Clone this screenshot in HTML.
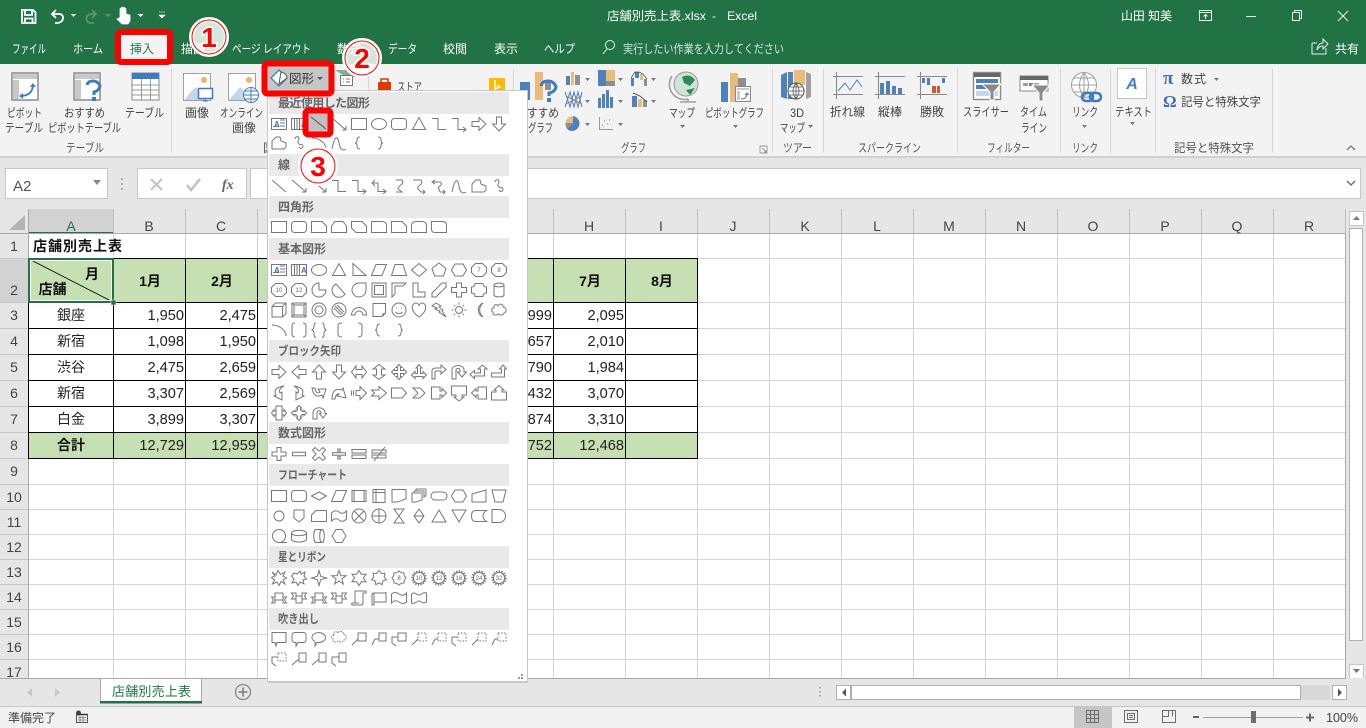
<!DOCTYPE html>
<html lang="ja"><head><meta charset="utf-8"><title>店舗別売上表.xlsx - Excel</title>
<style>
html,body{margin:0;padding:0;background:#e6e6e6;overflow:hidden}
svg{display:block;position:absolute;left:0;top:0}
text{font-family:"Liberation Sans","Noto Sans CJK JP",sans-serif;font-size:12px;fill:#444}
.w text{fill:#fff}
.rb text{fill:#444;font-size:12px}
.gl text{fill:#555;font-size:12px}
.n text{font-size:14.6px;fill:#222;text-anchor:end}
.c text{font-size:14px;fill:#222;text-anchor:middle}
.b text{font-size:14px;font-weight:700;fill:#111;text-anchor:middle}
.h text{font-size:14px;fill:#444;text-anchor:middle}
.hd text{font-size:12px;font-weight:700;fill:#666}
.ic{fill:none;stroke:#777;stroke-width:1}
.sm{font-size:6px;fill:#666;text-anchor:middle;stroke:none}
.blueA{font-size:8px;font-weight:700;fill:#3b78c2;stroke:none}
.num{font-size:28px;font-weight:700;fill:#f00;stroke:#fff;stroke-width:3px;paint-order:stroke;text-anchor:middle;font-family:"Liberation Sans",sans-serif}
</style></head><body>
<svg width="1366" height="728" viewBox="0 0 1366 728" xmlns="http://www.w3.org/2000/svg">
<defs>
<path id="tbx" d="M-7.500-5.500h15v11h-15z"/>
<path id="line" d="M-7-6L7 6"/>
<path id="arr" d="M-7-6L7 6M7 6V2M7 6H3"/>
<path id="darr" d="M-7-6L7 6M7 6V2M7 6H3M-7-6V-2M-7-6H-3"/>
<path id="rect" d="M-7.500-5.500h15v11h-15z"/>
<ellipse id="ell" cx="0" cy="0" rx="7.500" ry="5.500"/>
<rect id="rr" x="-7.500" y="-5.500" width="15" height="11" rx="3"/>
<path id="tri" d="M0-6.500L6.500 5.500H-6.500Z"/>
<path id="elb" d="M-7-5.500H-1V5.500H7"/>
<path id="elba" d="M-7-5.500H-1V5.500H7M4 3l3 2.500-3 2.500"/>
<path id="elbd" d="M-7-3H-1V5.500H7M4 3l3 2.500-3 2.500M-4-6l-3 3 3 3"/>
<path id="ra" d="M-7-2.500H0V-6.500L7 0 0 6.500V2.500H-7Z"/>
<path id="la" d="M7-2.500H0V-6.500L-7 0 0 6.500V2.500H7Z"/>
<path id="ua" d="M-2.500 7V0H-6.500L0-7 6.500 0H2.500V7Z"/>
<path id="da" d="M-2.500-7V0H-6.500L0 7 6.500 0H2.500V-7Z"/>
<path id="free" d="M-7 6V-2L-3-6H1L2-2 7 0V4L5 6Z"/>
<path id="scr" d="M-4-4c0-3 5-3 4 0-1 3-2 3 0 5s3-1 4 2c0 3-3 3-4 1"/>
<path id="arc" d="M-7-5C0-5 7 0 7 6"/>
<path id="crv" d="M-7 6C-4-9-1-7 0 0S4 8 7 6"/>
<path id="lb" d="M2-6Q-1-6-1-3T-3 0Q-1 0-1 3T2 6"/>
<path id="rb" d="M-2-6Q1-6 1-3T3 0Q1 0 1 3T-2 6"/>
<path id="cur" d="M-3-6H3Q5-3 2-1T-1 3L3 6H-3"/>
<path id="cura" d="M-6-6H2Q4-3 1-1T-1 3L2 6H6M4 4l2 2-2 2"/>
<path id="curd" d="M-7-4H1Q4-2 1 0T0 3L1 6H6M4 4l2 2-2 2M-4-6l-3 2 3 2"/>
<path id="sn1" d="M-7.500-5.500H3L7.500-1V5.500H-7.500Z"/>
<path id="sn2" d="M-4-5.500H4L7.500-1V5.500H-7.500V-1Z"/>
<path id="sn3" d="M-7.500-5.500H3L7.500-1V5.500H-3L-7.500 1Z"/>
<path id="sn4" d="M-7.500-5.500H3Q7.500-5.500 7.500-1V5.500H-7.500Z"/>
<path id="sn5" d="M-3-5.500H3Q7.500-5.500 7.500-1V5.500H-7.500V-1Q-7.500-5.500-3-5.500Z"/>
<path id="sn6" d="M-7.500-5.500H4Q7.500-5.500 7.500-2V5.500H-4Q-7.500 5.500-7.500 2Z"/>
<path id="rtri" d="M-6-6.500L7 5.500H-6Z"/>
<path id="para" d="M-3-5.500H7.500L3 5.500H-7.500Z"/>
<path id="trap" d="M-4-5.500H4L7.500 5.500H-7.500Z"/>
<path id="diam" d="M0-6.500L7.500 0 0 6.500-7.500 0Z"/>
<path id="fdia" d="M0-4L7.500 0 0 4-7.500 0Z"/>
<path id="pent" d="M0-7L7-1.500 4.500 6H-4.500L-7-1.500Z"/>
<path id="hex" d="M-4-6H4L7.500 0 4 6H-4L-7.500 0Z"/>
<path id="oct" d="M-3.500-6.500H3.500L7.500-2.500V2.500L3.500 6.500H-3.500L-7.500 2.500V-2.500Z"/>
<path id="pie" d="M0-7A7 7 0 1 0 7 0H0Z"/>
<path id="chord" d="M-3-6A7 7 0 1 0 6 4Z"/>
<path id="tear" d="M7-7V0A7 7 0 1 1 0-7Z"/>
<path id="frame" d="M-7-7H7V7H-7ZM-4.500-4.500H4.500V4.500H-4.500Z"/>
<path id="hfr" d="M-7-7H7L4-4H-4V4L-7 7Z"/>
<path id="lsh" d="M-6-7H-1V2H6V7H-6Z"/>
<path id="diag" d="M-7 3L3-7H7V-3L-3 7H-7Z"/>
<path id="plus" d="M-2.500-7H2.500V-2.500H7.500V2.500H2.500V7H-2.500V2.500H-7.500V-2.500H-2.500Z"/>
<path id="plq" d="M-4-6.500H4Q4-3 7.500-3V3Q4 3 4 6.500H-4Q-4 3-7.500 3V-3Q-4-3-4-6.500Z"/>
<path id="can" d="M-5-5V5C-5 7.500 5 7.500 5 5V-5C5-7.500-5-7.500-5-5C-5-2.500 5-2.500 5-5"/>
<path id="cube" d="M-7-3.500H3.500V7H-7ZM-7-3.500L-3.500-7H7V3.500L3.500 7M3.500-3.500L7-7"/>
<path id="bev" d="M-7-7H7V7H-7ZM-5-5H5V5H-5ZM-7-7L-5-5M7-7L5-5M-7 7L-5 5M7 7L5 5"/>
<path id="don" d="M0-7A7 7 0 1 0 0 7A7 7 0 1 0 0-7M0-4A4 4 0 1 0 0 4A4 4 0 1 0 0-4"/>
<path id="nos" d="M0-7A7 7 0 1 0 0 7A7 7 0 1 0 0-7M-4-4L4 4M-2-5L5 2M-5-2L2 5"/>
<path id="barc" d="M-7.500 5A7.500 7.500 0 0 1 7.500 5H4A4 4 0 0 0-4 5Z"/>
<path id="fold" d="M-6-6.500H6.500V3L3 6.500H-6ZM3 6.500L4 4 6.500 3"/>
<path id="smi" d="M0-7A7 7 0 1 0 0 7A7 7 0 1 0 0-7M-3-2h.8M2.200-2H3M-3.500 2Q0 5.500 3.500 2"/>
<path id="hrt" d="M0 7C-10 0-7-7-3-7-1-7 0-5 0-4 0-5 1-7 3-7 7-7 10 0 0 7Z"/>
<path id="bolt" d="M-3-7L2-4 0-3 4 0 3 1 7 7 0 2 1 1-4-1-2-2-7-4Z"/>
<path id="sun" d="M0-3.500A3.500 3.500 0 1 0 0 3.500A3.500 3.500 0 1 0 0-3.500M0-7.500V-5.500M0 5.500V7.500M-7.500 0H-5.500M5.500 0H7.500M-5-5L-4-4M5 5L4 4M-5 5L-4 4M5-5L4-4"/>
<path id="moon" d="M4-7A7.500 7.500 0 0 0 4 7A9 9 0 0 1 4-7Z"/>
<path id="cld" d="M-5-2C-6-6-2-6-1-4 0-7 5-6 4-3 8-3 8 3 5 3 4 6 0 5-1 4-3 6-7 5-6 2-8 2-8-2-5-2Z"/>
<path id="bp" d="M-4-7Q-7-7-7-4V4Q-7 7-4 7M4-7Q7-7 7-4V4Q7 7 4 7"/>
<path id="bcp" d="M-3-7Q-5-7-5-4T-7.500 0Q-5 0-5 4T-3 7M3-7Q5-7 5-4T7.500 0Q5 0 5 4T3 7"/>
<path id="lbk" d="M2-7Q-2-7-2-4V4Q-2 7 2 7"/>
<path id="rbk" d="M-2-7Q2-7 2-4V4Q2 7-2 7"/>
<path id="lra" d="M-7.500 0L-3-6V-2.500H3V-6L7.500 0 3 6V2.500H-3V6Z"/>
<path id="uda" d="M0-7.500L6-3H2.500V3H6L0 7.500-6 3H-2.500V-3H-6Z"/>
<path id="qua" d="M0-7.500L3-4.500H1.500V-1.500H4.500V-3L7.500 0 4.500 3V1.500H1.500V4.500H3L0 7.500-3 4.500H-1.500V1.500H-4.500V3L-7.500 0-4.500-3V-1.500H-1.500V-4.500H-3Z"/>
<path id="lru" d="M0-7.500L3-4H1.500V1.500H4V-.5L7.500 3 4 6.500V4.500H-4V6.500L-7.500 3-4-.5V1.500H-1.500V-4H-3Z"/>
<path id="bent" d="M-7 7V-1Q-7-4-3-4H2V-7L7-2.500 2 2V-1H-3Q-4-1-4 0V7Z"/>
<path id="utn" d="M-7 7V-2C-7-8 5-8 5-2V0H7.500L3 5-1.500 0H1V-2C1-4-3-4-3-2V7Z"/>
<path id="lup" d="M7 -3V4H-3V6.500L-7.500 2.500-3-1.500V1H3V-3H.5L5-7 9.500-3Z" transform="translate(-1.500 0)"/>
<path id="bup" d="M-7.500 1H2.500V-3H.5L4-7 7.500-3H5.500V5H-7.500Z"/>
<path id="cvr" d="M5-7Q-7-5-3 2L-5 3 3 7 3-1 1 0Q-1-4 5-7Z"/>
<path id="cvl" d="M-5-7Q7-5 3 2L5 3-3 7-3-1-1 0Q1-4-5-7Z"/>
<path id="cvu" d="M-7-5Q-5 6 3 2L4 5 7-4-1-4 1-1Q-3 2-4-5Z"/>
<path id="cvd" d="M-7 6Q-7-6 3-3L4-5 7 5-2 3 0 1Q-3 0-4 6Z"/>
<path id="stra" d="M-7.500-2.500V2.500M-5.500-2.500V2.500M-3-2.500H1V-6.500L7.500 0 1 6.500V2.500H-3Z"/>
<path id="ntch" d="M-7.500-3H0V-6.500L7.500 0 0 6.500V3H-7.500L-4.500 0Z"/>
<path id="home" d="M-7.500-5H3L7.500 0 3 5H-7.500Z"/>
<path id="chev" d="M-6-5H1L6 0 1 5H-6L-1 0Z"/>
<path id="clr" d="M-7.500-6H1V-2H3V-4.500L7.500 0 3 4.500V2H1V6H-7.500Z"/>
<path id="cld2" d="M-7.500-7H7.500V2H3V4H5L0 8-5 4H-3V2H-7.500Z"/>
<path id="cll" d="M7.500-6H-1V-2H-3V-4.500L-7.500 0-3 4.500V2H-1V6H7.500Z"/>
<path id="clu" d="M-7.500 7V-1H-3V-3H-5L0-7.500 5-3H3V-1H7.500V7Z"/>
<path id="cllr" d="M-3-7H3V7H-3ZM-3-2H-5V-3.500L-7.500 0-5 3.500V2H-3M3-2H5V-3.500L7.500 0 5 3.500V2H3"/>
<path id="clq" d="M0-7.500L2.500-5H1.500V-3H3V-1.500H5V-2.500L7.500 0 5 2.500V1.500H3V3H1.500V5H2.500L0 7.500-2.500 5H-1.500V3H-3V1.500H-5V2.500L-7.500 0-5-2.500V-1.500H-3V-3H-1.500V-5H-2.500Z"/>
<path id="cira" d="M-6 6V0C-6-7 6-7 6 0V.5H7.500L4 5 .5.5H2V0C2-3-2-3-2 0V6Z"/>
<path id="mth+" d="M-2-6.500H2V-2H7V2H2V6.500H-2V2H-7V-2H-2Z"/>
<path id="mth-" d="M-6.500-1.800H6.500V1.800H-6.500Z"/>
<path id="mthx" d="M-4-6.500L0-3 4-6.500 6.500-4 3 0 6.500 4 4 6.500 0 3-4 6.500-6.500 4-3 0-6.500-4Z"/>
<path id="mthd" d="M-6.500-1.200H6.500V1.200H-6.500ZM-1.200-5h2.400v2.400h-2.400ZM-1.200 2.600h2.400v2.400h-2.400Z"/>
<path id="mthe" d="M-7-4.500H7V-1H-7ZM-7 1H7V4.500H-7Z"/>
<path id="mthn" d="M-7-4H7V-1H-7ZM-7 1H7V4H-7ZM-5 7L6-7"/>
<path id="pfl" d="M-7-5.500H7V5.500H-7ZM-5-5.500V5.500M5-5.500V5.500"/>
<path id="int" d="M-6-6.500H6V6.500H-6ZM-6-3.500H6M-3-6.500V6.500"/>
<path id="doc" d="M-7-6.500H7V3C4 3 1 7-7 6Z"/>
<path id="mdoc" d="M-7-3H3V4C1 4-2 7-7 6ZM-5-3V-5H5V2M-3-5V-7H7V0H5"/>
<path id="term" d="M-4-4H4A4 4 0 0 1 4 4H-4A4 4 0 0 1-4-4Z"/>
<path id="manu" d="M-7-2L7-6V6H-7Z"/>
<path id="mano" d="M-7-6H7L4 6H-4Z"/>
<circle id="sc" cx="0" cy="0" r="5"/>
<path id="offp" d="M-5-6H5V2L0 6-5 2Z"/>
<path id="card" d="M-3-5.500H7.500V5.500H-7.500V-1Z"/>
<path id="tape" d="M-7.500-3Q-3.500-7 0-4T7.500-5V3Q3.500 7 0 4T-7.500 5Z"/>
<path id="sumj" d="M0-7A7 7 0 1 0 0 7A7 7 0 1 0 0-7M-5-5L5 5M5-5L-5 5"/>
<path id="orf" d="M0-7A7 7 0 1 0 0 7A7 7 0 1 0 0-7M0-7V7M-7 0H7"/>
<path id="coll" d="M-5-7H5L-5 7H5Z"/>
<path id="sort" d="M0-7L5 0 0 7-5 0ZM-5 0H5"/>
<path id="ext" d="M0-6L7 6H-7Z"/>
<path id="merg" d="M-7-6H7L0 6Z"/>
<path id="stor" d="M-4-5.500H7.500Q4-3 4 0T7.500 5.500H-4Q-7.500 5-7.500 0T-4-5.500Z"/>
<path id="dly" d="M-7-6.500H0A6.500 6.500 0 0 1 0 6.500H-7Z"/>
<path id="seq" d="M0-6.500A6.500 6.500 0 1 0 0 6.500H8M0 6.500A6.500 6.500 0 0 0 0-6.500"/>
<path id="mag" d="M-7.500-3V3C-7.500 7 7.500 7 7.500 3V-3C7.500-6.500-7.500-6.500-7.500-3C-7.500 .5 7.500 .5 7.500-3"/>
<path id="dir" d="M-3-6.500H3C6-6.500 6 6.500 3 6.500H-3C-6 6.500-6-6.500-3-6.500ZM3-6.500C0-6.500 0 6.500 3 6.500"/>
<path id="dsp" d="M-3-6.500H3L7 0 3 6.500H-3L-7 0Z"/>
<path id="exp1" d="M-7-6L-3-3-1-7.500 1.500-3.500 6-6 4-2 7.500 0 4 2 6 6 2 3.500 0 7.500-2 4-6.500 6-4.500 2-7.500-.5-4-2Z"/>
<path id="exp2" d="M-5-5L-2-4 1-7 2-4 6-6 5-2 7.500 1 4 2 5 6 1 4-1 7.500-3 4-7 5-5 1-7.500-2Z"/>
<path id="st4" d="M0-7.500L1.700-1.700 7.500 0 1.700 1.700 0 7.500-1.700 1.700-7.500 0-1.700-1.700Z"/>
<path id="st5" d="M0-7.500L1.800-2.400 7.100-2.300 2.900.9 4.400 6 0 3-4.400 6-2.900.9-7.100-2.300-1.800-2.400Z"/>
<path id="st6" d="M0-7.500L2.300-3.700H7L4.400 0 7 3.700H2.300L0 7.500-2.300 3.700H-7L-4.400 0-7-3.700H-2.300Z"/>
<path id="st7" d="M0-7.500L2.400-4.500 6-4.700 5.200-1 7.300 1.700 3.900 2.900 3.200 6.700 0 4.800-3.200 6.700-3.900 2.900-7.300 1.700-5.200-1-6-4.700-2.400-4.500Z"/>
<path id="st8" d="M0-7L2.200-5.300 5-5 5.300-2.200 7 0 5.300 2.200 5 5 2.200 5.300 0 7-2.200 5.300-5 5-5.300 2.200-7 0-5.300-2.200-5-5-2.200-5.300Z"/>
<g id="st16"><circle cx="0" cy="0" r="6.700" stroke-width="2" stroke-dasharray="1.300 1.300"/><circle cx="0" cy="0" r="5.600"/></g>
<path id="rbu" d="M-7.500-1L-4-1V-5H4V-1H7.500L5.500 2 7.500 5H4V2H-4V5H-7.500L-5.500 2ZM-4-1V2M4-1V2"/>
<path id="rbd" d="M-7.500-5H-3V-2H3V-5H7.500L5.500-2 7.500 1H3V5H-3V1H-7.500L-5.500-2ZM-3-2V1M3-2V1"/>
<path id="vsc" d="M-4-7H6Q8-7 7-5H4V5Q4 7 2 7H-6Q-8 7-7 5H-4ZM-4 5H0"/>
<path id="hsc" d="M-7-3Q-7-5-5-5H7V4H-5V7H-7ZM-5-5V4M7-5V-6"/>
<path id="wav" d="M-7.500-4Q-4-7 0-4T7.500-5V4Q4 7 0 4T-7.500 5Z"/>
<path id="dwav" d="M-7.500-4Q-5-6-2.500-4T2.500-4 7.500-5V4Q5 6 2.500 4T-2.500 4-7.500 5Z"/>
<path id="wr" d="M-7-6.500H7V3.500H-2L-3 7-4 3.500H-7Z"/>
<path id="wrr" d="M-4-6.500H4Q7-6.500 7-3.500V.5Q7 3.500 4 3.500H-1L-3 7-3 3.500H-4Q-7 3.500-7 .5V-3.500Q-7-6.500-4-6.500Z"/>
<path id="wel" d="M0-6.500A7.500 5 0 1 1 -2 3.500L-4 7V2.500A7.500 5 0 0 1 0-6.500Z"/>
<path id="cl1" d="M-1-6H7V2H-1ZM-1 0L-7 6"/>
<path id="cl2" d="M0-6H7V2H0ZM0 0H-4L-7 6"/>
<path id="cl3" d="M-1-6H7V2H-1ZM-1-2H-7V4L-3 7"/>
<path id="cl1d" d="M-1-6H7V2H-1Z" stroke-dasharray="1.500 1.500"/>
<path id="ac1" d="M0-6H7V3H0ZM0-6V3M0 0L-7 6"/>
<path id="ac3" d="M0-6H7V3H0ZM0-6V3M0-2H-7V4L-3 7"/>
</defs>

<!-- title bar -->
<rect width="1366" height="64" fill="#217346"/>
<g fill="none" stroke="#fff" stroke-width="1.800">
<path d="M22 10H33L35.500 12.500V23H22Z"/>
<path d="M25 10.500V15H32V10.500M25 23V18.500H32.500V23"/>
<path d="M56 10L52 14 56 18M52.500 14H60Q63.500 15 63 18.500T58 23H55"/>
<path d="M92 10L96 14 92 18M95.500 14H93Q86.500 14 86.500 18.500T91 23H94" stroke="#5a9476"/>
</g>
<path d="M70.500 14h6l-3 3z" fill="#cfe0d6"/><path d="M105 14h6l-3 3z" fill="#5a9476"/>
<path d="M120 9a3.500 3.500 0 0 1 6 0v5l4 1v6l-2 3h-6l-5-5 2-1 1 1zM123 9v3" fill="#fff" stroke="#fff" stroke-width=".8"/>
<path d="M137.500 14h6l-3 3z" fill="#fff"/>
<path d="M159 12h6M159 15h6l-3 3z" fill="#fff" stroke="#fff" stroke-width=".6"/>
<g class="w">
<text x="607" y="20" textLength="99" lengthAdjust="spacingAndGlyphs">店舗別売上表.xlsx</text>
<text x="712" y="20">-</text>
<text x="727" y="20" textLength="30" lengthAdjust="spacingAndGlyphs">Excel</text>
<text x="1121" y="20" textLength="51" lengthAdjust="spacingAndGlyphs">山田 知美</text>
<text x="12" y="53" textLength="34" lengthAdjust="spacingAndGlyphs">ファイル</text>
<text x="73" y="53" textLength="30" lengthAdjust="spacingAndGlyphs">ホーム</text>
<text x="181" y="53" textLength="24" lengthAdjust="spacingAndGlyphs">描画</text>
<text x="232" y="53" textLength="79" lengthAdjust="spacingAndGlyphs">ページ レイアウト</text>
<text x="337" y="53" textLength="24" lengthAdjust="spacingAndGlyphs">数式</text>
<text x="388" y="53" textLength="29" lengthAdjust="spacingAndGlyphs">データ</text>
<text x="443" y="53" textLength="24" lengthAdjust="spacingAndGlyphs">校閲</text>
<text x="494" y="53" textLength="24" lengthAdjust="spacingAndGlyphs">表示</text>
<text x="544" y="53" textLength="31" lengthAdjust="spacingAndGlyphs">ヘルプ</text>
<text x="623" y="53" textLength="161" lengthAdjust="spacingAndGlyphs" style="fill:#d4e5db">実行したい作業を入力してください</text>
<text x="1335" y="53" textLength="24" lengthAdjust="spacingAndGlyphs">共有</text>
</g>
<g fill="none" stroke="#e8f0ec" stroke-width="1">
<circle cx="610" cy="45" r="4.500"/><path d="M607 49L603 54"/>
<path d="M1312 43H1317M1312 43V54H1326V48M1317 50Q1318 43 1323 43V39L1328 44 1323 49V46Q1319 46 1317 50Z"/>
<path d="M1199.500 10.500H1211.500V20.500H1199.500ZM1199.500 12.500H1211.500M1205.500 19V14.500M1203.500 16.500L1205.500 14.500 1207.500 16.500"/>
<path d="M1246 16.500H1256"/>
<path d="M1292.500 12.500H1299.500V20.500H1292.500ZM1294.500 12.500V10.500H1301.500V18.500H1299.500"/>
<path d="M1338 11L1348 21M1348 11L1338 21" stroke-width="1.100"/>
</g>

<!-- ribbon -->
<rect y="64" width="1366" height="93" fill="#f3f3f3"/>
<rect y="157" width="1366" height="52" fill="#e6e6e6"/>
<rect y="156" width="1366" height="2" fill="#d0d0d0"/>
<path d="M171.500 69V153M513.500 69V153M772.500 69V153M823.500 69V153M957.500 69V153M1060.500 69V153M1110.500 69V153M1155.500 69V153M1272.500 69V153M368.500 69V90" stroke="#d6d6d6"/>

<!-- pivot table -->
<path d="M12 73H38V100H12Z" fill="#fff" stroke="#8a8a8a" stroke-width="1.500"/>
<path d="M13 74H37V79H13ZM13 80H19V99H13Z" fill="#c9c9c9"/>
<path d="M20 96Q33 96 33 84" fill="none" stroke="#3d7cc1" stroke-width="1.800"/>
<path d="M30 87l3-4 3 4zM23 93l-4 3 4 3z" fill="#3d7cc1"/>
<!-- recommended pivot -->
<path d="M74 73H100V100H74Z" fill="#fff" stroke="#8a8a8a" stroke-width="1.500"/>
<path d="M75 74H99V79H75ZM75 80H81V99H75Z" fill="#c9c9c9"/>
<path d="M87 85Q88 81 93 81T100 86Q99 91 94 92V95" fill="none" stroke="#3d7cc1" stroke-width="3"/>
<rect x="92" y="97" width="4" height="4" fill="#3d7cc1"/>
<!-- table -->
<rect x="132" y="73" width="27" height="27" fill="#fff" stroke="#8a8a8a"/>
<rect x="132" y="73" width="27" height="6" fill="#3d7cc1"/>
<path d="M132.500 85H159M132.500 90H159M132.500 95H159M141.500 79V100M150.500 79V100" stroke="#9a9a9a"/>
<!-- image -->
<g id="i1"><path d="M183.500 73.500H210.500V100.500H183.500Z" fill="#fff" stroke="#a0a0a0"/>
<path d="M184 100L195 87 203 94 206 100Z" fill="#c4d6ea"/><circle cx="204" cy="80" r="3" fill="#edb55f"/></g>
<rect x="198.500" y="88.500" width="14" height="10" fill="#fff" stroke="#3d7cc1" stroke-width="1.500"/><path d="M203 101H208M205.500 99V101" stroke="#3d7cc1"/>
<path d="M228.500 73.500H255.500V100.500H228.500Z" fill="#fff" stroke="#a0a0a0"/>
<path d="M229 100L240 87 248 94 251 100Z" fill="#c4d6ea"/><circle cx="249" cy="80" r="3" fill="#edb55f"/>
<circle cx="251" cy="95" r="7.500" fill="#fff" stroke="#3d7cc1"/><path d="M243.500 95H258.500M251 87.500V102.500M245 91H257M245 99H257" stroke="#3d7cc1" fill="none"/>
<g class="rb">
<text x="7" y="117" textLength="35" lengthAdjust="spacingAndGlyphs">ピボット</text>
<text x="5" y="132" textLength="38" lengthAdjust="spacingAndGlyphs">テーブル</text>
<text x="64" y="117" textLength="41" lengthAdjust="spacingAndGlyphs">おすすめ</text>
<text x="48" y="132" textLength="73" lengthAdjust="spacingAndGlyphs">ピボットテーブル</text>
<text x="125" y="117" textLength="39" lengthAdjust="spacingAndGlyphs">テーブル</text>
<text x="185" y="117" textLength="24">画像</text>
<text x="220" y="117" textLength="43" lengthAdjust="spacingAndGlyphs">オンライン</text>
<text x="232" y="132" textLength="24">画像</text>
<text x="397" y="91" textLength="25" lengthAdjust="spacingAndGlyphs">ストア</text>
<text x="527" y="117" textLength="32" lengthAdjust="spacingAndGlyphs">すすめ</text>
<text x="528" y="132" textLength="25" lengthAdjust="spacingAndGlyphs">グラフ</text>
<text x="669" y="117" textLength="26" lengthAdjust="spacingAndGlyphs">マップ</text>
<text x="705" y="117" textLength="59" lengthAdjust="spacingAndGlyphs">ピボットグラフ</text>
<text x="790" y="117" textLength="14" lengthAdjust="spacingAndGlyphs">3D</text>
<text x="780" y="132" textLength="25" lengthAdjust="spacingAndGlyphs">マップ</text>
<text x="830" y="116" textLength="35" lengthAdjust="spacingAndGlyphs">折れ線</text>
<text x="878" y="116" textLength="24">縦棒</text>
<text x="920" y="116" textLength="24">勝敗</text>
<text x="963" y="116" textLength="46" lengthAdjust="spacingAndGlyphs">スライサー</text>
<text x="1020" y="116" textLength="27" lengthAdjust="spacingAndGlyphs">タイム</text>
<text x="1021" y="132" textLength="26" lengthAdjust="spacingAndGlyphs">ライン</text>
<text x="1072" y="116" textLength="26" lengthAdjust="spacingAndGlyphs">リンク</text>
<text x="1115" y="116" textLength="37" lengthAdjust="spacingAndGlyphs">テキスト</text>
<text x="1181" y="83" textLength="25">数式</text>
<text x="1181" y="106" textLength="80" lengthAdjust="spacingAndGlyphs">記号と特殊文字</text>
</g>
<g class="gl">
<text x="66" y="152" textLength="38" lengthAdjust="spacingAndGlyphs">テーブル</text>
<text x="263" y="152">図</text>
<text x="621" y="152" textLength="25" lengthAdjust="spacingAndGlyphs">グラフ</text>
<text x="783" y="152" textLength="29" lengthAdjust="spacingAndGlyphs">ツアー</text>
<text x="858" y="152" textLength="63" lengthAdjust="spacingAndGlyphs">スパークライン</text>
<text x="987" y="152" textLength="43" lengthAdjust="spacingAndGlyphs">フィルター</text>
<text x="1072" y="152" textLength="26" lengthAdjust="spacingAndGlyphs">リンク</text>
<text x="1174" y="152" textLength="80" lengthAdjust="spacingAndGlyphs">記号と特殊文字</text>
</g>
<!-- store/bing/smartart -->
<path d="M378 82H391V92H378Z" fill="#d83b01"/><path d="M381 82V79H388V82" fill="none" stroke="#d83b01" stroke-width="1.500"/>
<rect x="489" y="78" width="16" height="14" fill="#ffb900"/><path d="M495 80V89L500 87 497 85" fill="none" stroke="#fff" stroke-width="1.500"/>
<path d="M335 70H350L355 77H346" fill="#7fae9a"/><rect x="340.500" y="75.500" width="12" height="10" fill="#fff" stroke="#777"/><path d="M343 79h1M343 82h1M346 79h4M346 82h4" stroke="#777"/>
<!-- recommended charts icon -->
<path d="M520 82H530V100H520Z" fill="#4f81bd"/><path d="M535 72H543V100H535Z" fill="#e8bd7a"/><path d="M545 80H551V90H545Z" fill="#8f8f8f"/>
<path d="M541 86Q542 81 548 81T556 87Q555 92 549 93V96" fill="none" stroke="#3d7cc1" stroke-width="3"/><rect x="547" y="98" width="4" height="4" fill="#3d7cc1"/>
<!-- small charts -->
<path d="M566 76h4v9h-4z" fill="#4f81bd"/><path d="M571 72h3v13h-3z" fill="#e8bd7a"/><path d="M575 75h5v10h-5z" fill="#8f8f8f"/>
<path d="M598 70h8v16h-8z" fill="#4f81bd"/><path d="M606 70h9v11h-9z" fill="#e8bd7a"/><path d="M606 81h9v5h-9z" fill="#8f8f8f"/>
<path d="M631 78h3v8h-3zM635 72h4v6h-4z" fill="#4f81bd"/><path d="M640 74h3v6h-3z" fill="#e8bd7a"/><path d="M644 79h3v7h-3z" fill="#8f8f8f"/><path d="M631 78l4-6h4l4 2 4 5" fill="none" stroke="#444" stroke-width=".7"/>
<path d="M565 92l5 15 4-15 4 15 4-15M565 107l5-15 4 15 4-15 4 15" fill="none" stroke="#4f81bd"/>
<path d="M566 96l16 8M566 104l16-8" stroke="#8f8f8f"/>
<path d="M598 98h3v10h-3zM602 94h3v14h-3zM606 90h3v18h-3zM610 97h3v11h-3z" fill="#4f81bd"/>
<path d="M632 96h5v11h-5z" fill="#4f81bd"/><path d="M638 99h4v8h-4z" fill="#e8bd7a"/><path d="M643 100h4v7h-4z" fill="#8f8f8f"/><path d="M633 93l7 3 7 6" stroke="#555" fill="none"/>
<path d="M573 116A7.500 7.500 0 1 1 567 129L573 123Z" fill="#4f81bd"/><path d="M565.500 123A7.500 7.500 0 0 1 573 116V123Z" fill="#e8bd7a"/><path d="M565.500 123H573L567 129Q565.500 127 565.500 123Z" fill="#8f8f8f"/>
<path d="M599.500 117V129.500H613" fill="none" stroke="#999"/><path d="M602 125h1M604 121h1M607 124h1M609 120h1" stroke="#4f81bd"/><path d="M603 127h1M606 120h1M610 124h1" stroke="#e8bd7a"/>
<g fill="#777"><path id="cr" d="M585 78h5l-2.500 3z"/><path d="M618 78h5l-2.500 3zM651 78h5l-2.500 3zM585 100h5l-2.500 3zM618 100h5l-2.500 3zM651 100h5l-2.500 3zM585 123h5l-2.500 3zM618 123h5l-2.500 3zM680 125h5l-2.500 3zM733 125h5l-2.500 3zM808 125h5l-2.500 3zM1082 125h5l-2.500 3zM1130 122h5l-2.500 3zM1214 78h5l-2.500 3z"/></g>
<!-- map -->
<circle cx="686" cy="84" r="12" fill="#cfe3d8" stroke="#999"/>
<path d="M682 77Q690 73 695 80L690 86 684 83ZM686 90L695 88 690 95Z" fill="#2f8a5f"/>
<path d="M672 76A15 15 0 0 0 688 99M680 102H696M688 99V102" fill="none" stroke="#a0a0a0" stroke-width="1.600"/>
<!-- pivot chart -->
<path d="M721 82h7v20h-7z" fill="#4f81bd"/><path d="M730 73h8v29h-8z" fill="#e8bd7a"/><path d="M738 78h8v10h-8z" fill="#8f8f8f"/>
<rect x="735.500" y="86.500" width="15" height="15" fill="#fff" stroke="#888"/><path d="M737 88h12v2h-12zM737 91h3v9h-3z" fill="#c9c9c9"/><path d="M741 99q6 0 6-6M745 95l2-2 2 2" fill="none" stroke="#3d7cc1"/>
<!-- 3D map -->
<path d="M781 75l6-3v27l-6-2z" fill="#4f81bd"/><path d="M788 72h5v27h-5z" fill="#4f81bd"/><path d="M794 70h6v15h-6zM800 70h5v15h-5z" fill="#e8bd7a"/><path d="M806 72l5 2v23l-5 2z" fill="#a0a0a0"/>
<circle cx="796" cy="91" r="8" fill="#fff" stroke="#555"/><path d="M788 91H804M796 83V99M790 87H802M790 95H802M796 83Q790 91 796 99Q802 91 796 83" fill="none" stroke="#555" stroke-width=".8"/>
<!-- sparklines -->
<g fill="none" stroke="#8a8a8a" stroke-width="1.100">
<path d="M833 76.500H863M833 94.500H863M836.500 72V99M875 76.500H905M875 94.500H905M878.500 72V99M917 76.500H947M917 94.500H947M920.500 72V99"/></g>
<path d="M838 91L845 83 850 90 857 80 862 87" fill="none" stroke="#4f81bd"/>
<path d="M880 83h4v11h-4zM886 81h4v13h-4zM892 86h4v8h-4zM898 88h4v6h-4z" fill="#4f81bd"/>
<path d="M922 78h3v5h-3zM927 78h3v7h-3zM942 78h3v5h-3z" fill="#4f81bd"/><path d="M932 86h4v7h-4zM937 86h3v7h-3z" fill="#cf5a2e"/>
<!-- slicer -->
<rect x="973.500" y="72.500" width="27" height="27" fill="#fff" stroke="#8a8a8a" stroke-width="1.400"/><rect x="974" y="73" width="26" height="4" fill="#666"/>
<rect x="976" y="79" width="22" height="4" fill="#4f81bd"/><rect x="976" y="85" width="12" height="4" fill="#4f81bd"/><rect x="976" y="91" width="22" height="5" fill="#c4d6ea"/>
<path d="M982 84H1001L994 92V100H990V92Z" fill="#8a8a8a" stroke="#fff"/>
<!-- timeline -->
<rect x="1020" y="76" width="28" height="15" fill="#fff" stroke="#888"/><rect x="1020" y="76" width="28" height="4" fill="#666"/>
<path d="M1023 83h5v3h-5zM1034 83h5v3h-5z" fill="#a0a0a0"/><path d="M1029 83h4v3h-4z" fill="#4f81bd"/>
<path d="M1032 85H1050L1043 93V101H1039V93Z" fill="#8a8a8a" stroke="#fff"/>
<!-- link -->
<circle cx="1084" cy="85" r="12.500" fill="#fff" stroke="#a0a0a0"/>
<path d="M1071.500 85H1096.500M1084 72.500V97.500M1074 78H1094M1074 92H1094M1084 72.500Q1075 85 1084 97.500Q1093 85 1084 72.500" fill="none" stroke="#a0a0a0"/>
<rect x="1082" y="93" width="11" height="8" rx="4" fill="none" stroke="#3d7cc1" stroke-width="2.600"/><rect x="1090" y="93" width="11" height="8" rx="4" fill="none" stroke="#3d7cc1" stroke-width="2.600"/>
<!-- text -->
<rect x="1117.500" y="68.500" width="29" height="30" fill="#fff" stroke="#c6c6c6"/>
<text x="1132" y="89" text-anchor="middle" style="font-size:16px;font-weight:700;font-style:italic;fill:#3f7fc8">A</text>
<text x="1163" y="84" style="font-family:'Liberation Serif',serif;font-size:19px;font-weight:700;fill:#3f6fb0">π</text>
<text x="1163" y="107" style="font-family:'Liberation Serif',serif;font-size:17px;font-weight:700;fill:#3f6fb0">Ω</text>
<path d="M1347 150l4-4 4 4" fill="none" stroke="#777" stroke-width="1.300"/>
<path d="M760 146h7v7h-7zM762 148l4 4M766 150v2h-2" fill="none" stroke="#999" stroke-width=".9"/>

<!-- 挿入 highlight -->
<rect x="118" y="32" width="52" height="30" rx="3" fill="#f3f3f3" stroke="#f00" stroke-width="6"/>
<text x="130" y="53" textLength="24" lengthAdjust="spacingAndGlyphs" style="fill:#2b7a52">挿入</text>

<!-- formula bar -->
<rect x="5.500" y="168.500" width="102" height="30" fill="#fff" stroke="#c6c6c6"/>
<text x="13" y="191" style="font-size:15px;fill:#555">A2</text>
<path d="M93 180h8l-4 5z" fill="#888"/>
<path d="M122 178v2M122 183v2M122 188v2" stroke="#aaa" stroke-width="2"/>
<rect x="137.500" y="168.500" width="109" height="30" fill="#fff" stroke="#c6c6c6"/>
<path d="M151 179L162 190M162 179L151 190" stroke="#c3c3c3" stroke-width="2"/>
<path d="M187 185L191 190 200 179" fill="none" stroke="#c3c3c3" stroke-width="2.600"/>
<text x="222" y="189" style="font-family:'Liberation Serif',serif;font-size:14px;font-style:italic;font-weight:700;fill:#666">fx</text>
<rect x="250.500" y="168.500" width="1110" height="30" fill="#fff" stroke="#c6c6c6"/>
<path d="M1347 181l4 4 4-4" fill="none" stroke="#666" stroke-width="1.300"/>

<!-- sheet base -->
<rect x="29" y="234" width="1317" height="444" fill="#fff"/>
<rect y="209" width="1346" height="25" fill="#e6e6e6"/>
<rect y="234" width="29" height="444" fill="#e6e6e6"/>
<rect y="259" width="28" height="44" fill="#d2d2d2"/>
<rect x="29" y="209" width="85" height="24" fill="#d2d2d2"/>
<rect x="29" y="232" width="85" height="2" fill="#217346"/>
<path d="M9 230L25 215V230Z" fill="#b4b4b4"/>
<path d="M29.500 233.500H1346M113.500 234V678M185.500 234V678M257.500 234V678M329.500 234V678M401.500 234V678M473.500 234V678M553.500 234V678M625.500 234V678M697.500 234V678M769.500 234V678M841.500 234V678M913.500 234V678M985.500 234V678M1057.500 234V678M1129.500 234V678M1201.500 234V678M1273.500 234V678M1345.500 234V678
M29 258.500H1346M29 302.500H1346M29 328.500H1346M29 354.500H1346M29 380.500H1346M29 406.500H1346M29 432.500H1346M29 458.500H1346M29 484.500H1346M29 509.500H1346M29 534.500H1346M29 559.500H1346M29 584.500H1346M29 609.500H1346M29 634.500H1346M29 659.500H1346" stroke="#d4d4d4" fill="none"/>
<path d="M113.500 209V233M185.500 209V233M257.500 209V233M553.500 209V233M625.500 209V233M697.500 209V233M769.500 209V233M841.500 209V233M913.500 209V233M985.500 209V233M1057.500 209V233M1129.500 209V233M1201.500 209V233M1273.500 209V233M1345.500 209V233" stroke="#bdbdbd"/>
<path d="M0 258.500H28M0 302.500H28M0 328.500H28M0 354.500H28M0 380.500H28M0 406.500H28M0 432.500H28M0 458.500H28M0 484.500H28M0 509.500H28M0 534.500H28M0 559.500H28M0 584.500H28M0 609.500H28M0 634.500H28M0 659.500H28" stroke="#c8c8c8"/>
<path d="M28.500 209V678M0 233.500H29M29 233.500H1346" stroke="#a8a8a8"/>

<!-- table fills -->
<rect x="29" y="259" width="669" height="44" fill="#c6e0b4"/>
<rect x="29" y="433" width="669" height="26" fill="#c6e0b4"/>
<path d="M28.500 258.500H697.500V458.500H28.500ZM28.500 302.500H697.500M28.500 328.500H697.500M28.500 354.500H697.500M28.500 380.500H697.500M28.500 406.500H697.500M28.500 432.500H697.500M113.500 258.500V458.500M185.500 258.500V458.500M257.500 258.500V458.500M329.500 258.500V458.500M401.500 258.500V458.500M473.500 258.500V458.500M553.500 258.500V458.500M625.500 258.500V458.500" stroke="#000" fill="none"/>

<g class="h">
<text x="71" y="231" style="fill:#217346">A</text><text x="149" y="231">B</text><text x="221" y="231">C</text>
<text x="589" y="231">H</text><text x="661" y="231">I</text><text x="733" y="231">J</text><text x="805" y="231">K</text><text x="877" y="231">L</text><text x="949" y="231">M</text><text x="1021" y="231">N</text><text x="1093" y="231">O</text><text x="1165" y="231">P</text><text x="1237" y="231">Q</text><text x="1309" y="231">R</text>
<text x="14" y="251">1</text><text x="14" y="295">2</text><text x="14" y="320">3</text><text x="14" y="346">4</text><text x="14" y="372">5</text><text x="14" y="398">6</text><text x="14" y="424">7</text><text x="14" y="450">8</text><text x="14" y="476">9</text><text x="14" y="502">10</text><text x="14" y="527">11</text><text x="14" y="552">12</text><text x="14" y="577">13</text><text x="14" y="602">14</text><text x="14" y="627">15</text><text x="14" y="652">16</text><text x="14" y="677">17</text>
</g>
<text x="33" y="251" style="font-size:14px;font-weight:700;fill:#111" textLength="89">店舗別売上表</text>
<g class="b">
<text x="92" y="279">月</text><text x="52.500" y="294">店舗</text>
<text x="150" y="286">1月</text><text x="222" y="286">2月</text><text x="590" y="286">7月</text><text x="662" y="286">8月</text>
<text x="71" y="450">合計</text>
</g>
<g class="c">
<text x="71" y="320">銀座</text><text x="71" y="346">新宿</text><text x="71" y="372">渋谷</text><text x="71" y="398">新宿</text><text x="71" y="424">白金</text>
</g>
<g class="n">
<text x="184" y="320">1,950</text><text x="184" y="346">1,098</text><text x="184" y="372">2,475</text><text x="184" y="398">3,307</text><text x="184" y="424">3,899</text><text x="184" y="450">12,729</text>
<text x="256" y="320">2,475</text><text x="256" y="346">1,950</text><text x="256" y="372">2,659</text><text x="256" y="398">2,569</text><text x="256" y="424">3,307</text><text x="256" y="450">12,959</text>
<text x="552" y="320">1,999</text><text x="552" y="346">2,657</text><text x="552" y="372">1,790</text><text x="552" y="398">3,432</text><text x="552" y="424">2,874</text><text x="552" y="450">12,752</text>
<text x="624" y="320">2,095</text><text x="624" y="346">2,010</text><text x="624" y="372">1,984</text><text x="624" y="398">3,070</text><text x="624" y="424">3,310</text><text x="624" y="450">12,468</text>
</g>
<!-- A2 selection -->
<path d="M31 260L111 301" stroke="#000" stroke-width=".8"/>
<rect x="29" y="259" width="84" height="43" fill="none" stroke="#217346" stroke-width="2"/>
<rect x="30.500" y="260.500" width="81" height="40" fill="none" stroke="#fff"/>
<rect x="111" y="300" width="5" height="5" fill="#217346" stroke="#fff" stroke-width=".5"/>

<!-- scrollbar right -->
<rect x="1346" y="209" width="20" height="498" fill="#e6e6e6"/>
<path d="M1345.500 234V678" stroke="#a8a8a8"/>
<rect x="1349.500" y="211.500" width="14" height="14" fill="#fff" stroke="#c6c6c6"/><path d="M1353 220l3.500-4 3.500 4z" fill="#777"/>
<rect x="1349.500" y="228.500" width="13" height="412" fill="#fff" stroke="#b0b0b0"/>
<rect x="1349.500" y="664.500" width="14" height="14" fill="#fff" stroke="#c6c6c6"/><path d="M1353 669h7l-3.500 4z" fill="#777"/>

<!-- tabs row -->
<rect y="678" width="1366" height="29" fill="#e6e6e6"/>
<path d="M0 678.500H1346" stroke="#a8a8a8"/>
<rect x="100.500" y="678.500" width="101" height="23" fill="#fff" stroke="#a8a8a8"/>
<rect x="100" y="701" width="102" height="2.500" fill="#217346"/>
<text x="112" y="696" textLength="79" style="font-size:13px;fill:#217346">店舗別売上表</text>
<path d="M32 688l-5 4.500 5 4.500zM55 688l5 4.500-5 4.500z" fill="#c8c8c8"/>
<circle cx="243" cy="692" r="7.500" fill="none" stroke="#888" stroke-width="1.300"/><path d="M243 687.500V696.500M238.500 692H247.500" stroke="#888" stroke-width="1.800"/>
<path d="M820 687v1.500M820 691v1.500M820 695v1.500" stroke="#aaa" stroke-width="2"/>
<rect x="836.500" y="685.500" width="14" height="14" fill="#fff" stroke="#b0b0b0"/><path d="M846 688.500l-4 4 4 4z" fill="#555"/>
<rect x="851.500" y="685.500" width="449" height="14" fill="#fff" stroke="#b0b0b0"/>
<rect x="1301" y="685" width="29" height="15" fill="#d8d8d8"/>
<rect x="1332.500" y="685.500" width="14" height="14" fill="#fff" stroke="#b0b0b0"/><path d="M1338 688.500l4 4-4 4z" fill="#555"/>

<!-- status bar -->
<rect y="707" width="1366" height="21" fill="#f1f1f1"/>
<path d="M0 706.500H1366" stroke="#c6c6c6"/>
<text x="8" y="722" textLength="48" style="font-size:12px;fill:#444">準備完了</text>
<circle cx="78.500" cy="713" r="2.500" fill="#444"/><rect x="76.500" y="714.500" width="11" height="8" fill="none" stroke="#555"/><path d="M76.500 714.500H87.500" stroke="#333" stroke-width="1.500"/><path d="M78 717.500h8M78 720h8M80 716v6M83 716v6" stroke="#777" stroke-width=".7"/>
<rect x="1074" y="707" width="38" height="21" fill="#c6c6c6"/>
<path d="M1086.500 710.500H1098.500V722.500H1086.500ZM1086.500 714.500H1098.500M1086.500 718.500H1098.500M1090.500 710.500V722.500M1094.500 710.500V722.500" fill="none" stroke="#6e6e6e"/>
<path d="M1124.500 710.500H1137.500V722.500H1124.500ZM1127.500 713.500H1134.500V719.500H1127.500ZM1129 715.500H1133M1129 717.500H1133" fill="none" stroke="#6e6e6e"/>
<path d="M1162.500 710.500V722.500H1175.500V710.500ZM1162.500 716.500H1168.500V710.500M1172.500 710.500V716.500" fill="none" stroke="#6e6e6e"/>
<path d="M1193 717H1199" stroke="#666" stroke-width="2"/>
<path d="M1203 717.500H1303" stroke="#a0a0a0"/>
<rect x="1251" y="711" width="5" height="12" fill="#6e6e6e"/>
<path d="M1306 717.500H1314M1310 713.500V721.500" stroke="#666" stroke-width="2"/>
<text x="1326" y="722" textLength="32" style="font-size:12.500px;fill:#444">100%</text>

<!-- shapes panel -->
<rect x="268" y="93" width="260" height="590" fill="#000" opacity=".12"/>
<rect x="267.500" y="90.500" width="260" height="591" fill="#fff" stroke="#c6c6c6"/>
<g fill="#e9e9e9">
<rect x="269" y="92" width="240" height="22"/><rect x="269" y="154" width="240" height="22"/><rect x="269" y="196" width="240" height="22"/><rect x="269" y="238" width="240" height="22"/><rect x="269" y="340" width="240" height="22"/><rect x="269" y="422" width="240" height="22"/><rect x="269" y="464" width="240" height="22"/><rect x="269" y="546" width="240" height="22"/><rect x="269" y="608" width="240" height="22"/>
</g>
<g class="hd">
<text x="278" y="107" textLength="92">最近使用した図形</text>
<text x="278" y="169">線</text>
<text x="278" y="211" textLength="36">四角形</text>
<text x="278" y="253" textLength="48">基本図形</text>
<text x="278" y="355" textLength="63" lengthAdjust="spacingAndGlyphs">ブロック矢印</text>
<text x="278" y="437" textLength="48">数式図形</text>
<text x="278" y="479" textLength="69" lengthAdjust="spacingAndGlyphs">フローチャート</text>
<text x="278" y="561" textLength="48" lengthAdjust="spacingAndGlyphs">星とリボン</text>
<text x="278" y="623" textLength="41" lengthAdjust="spacingAndGlyphs">吹き出し</text>
</g>

<g class="ic">
<!-- recent -->
<use href="#tbx" x="279" y="124"/><path d="M280 120h5M280 123h5M280 126h5M273 126.500h6"/>
<use href="#tbx" x="299" y="124"/><path d="M294.500 119v10M297 119v10M299.500 119v10"/>
<use href="#arr" x="339" y="124"/><use href="#rect" x="359" y="124"/><use href="#ell" x="379" y="124"/><use href="#rr" x="399" y="124"/><use href="#tri" x="419" y="124"/><use href="#elb" x="439" y="124"/><use href="#elba" x="459" y="124"/><use href="#ra" x="479" y="124"/><use href="#da" x="499" y="124"/>
<use href="#free" x="279" y="143"/><use href="#scr" x="299" y="143"/><use href="#arc" x="319" y="143"/><use href="#crv" x="339" y="143"/><use href="#lb" x="358" y="143"/><use href="#rb" x="380" y="143"/>
<!-- lines -->
<use href="#line" x="279" y="186"/><use href="#arr" x="299" y="186"/><use href="#darr" x="319" y="186"/><use href="#elb" x="339" y="186"/><use href="#elba" x="359" y="186"/><use href="#elbd" x="379" y="186"/><use href="#cur" x="399" y="186"/><use href="#cura" x="419" y="186"/><use href="#curd" x="439" y="186"/><use href="#crv" x="459" y="186"/><use href="#free" x="479" y="186"/><use href="#scr" x="499" y="186"/>
<!-- rects -->
<use href="#rect" x="279" y="227"/><use href="#rr" x="299" y="227"/><use href="#sn1" x="319" y="227"/><use href="#sn2" x="339" y="227"/><use href="#sn3" x="359" y="227"/><use href="#sn4" x="379" y="227"/><use href="#sn1" x="399" y="227"/><use href="#sn5" x="419" y="227"/><use href="#sn6" x="439" y="227"/>
<!-- basic -->
<use href="#tbx" x="279" y="270"/><path d="M280 266h5M280 269h5M280 272h5M273 272.500h6"/><use href="#tbx" x="299" y="270"/><path d="M294.500 265v10M297 265v10M299.500 265v10"/><use href="#ell" x="319" y="270"/><use href="#tri" x="339" y="270"/><use href="#rtri" x="359" y="270"/><use href="#para" x="379" y="270"/><use href="#trap" x="399" y="270"/><use href="#diam" x="419" y="270"/><use href="#pent" x="439" y="270"/><use href="#hex" x="459" y="270"/><use href="#oct" x="479" y="270"/><use href="#oct" x="499" y="270"/>
<use href="#oct" x="279" y="290"/><use href="#oct" x="299" y="290"/><use href="#pie" x="319" y="290"/><use href="#chord" x="339" y="290"/><use href="#tear" x="359" y="290"/><use href="#frame" x="379" y="290"/><use href="#hfr" x="399" y="290"/><use href="#lsh" x="419" y="290"/><use href="#diag" x="439" y="290"/><use href="#plus" x="459" y="290"/><use href="#plq" x="479" y="290"/><use href="#can" x="499" y="290"/>
<use href="#cube" x="279" y="310"/><use href="#bev" x="299" y="310"/><use href="#don" x="319" y="310"/><use href="#nos" x="339" y="310"/><use href="#barc" x="359" y="310"/><use href="#fold" x="379" y="310"/><use href="#smi" x="399" y="310"/><use href="#hrt" x="419" y="310"/><use href="#bolt" x="439" y="310"/><use href="#sun" x="459" y="310"/><use href="#moon" x="479" y="310"/><use href="#cld" x="499" y="310"/>
<use href="#arc" x="279" y="330"/><use href="#bp" x="299" y="330"/><use href="#bcp" x="319" y="330"/><use href="#lbk" x="340" y="330"/><use href="#rbk" x="360" y="330"/><use href="#lb" x="378" y="330"/><use href="#rb" x="400" y="330"/>
<!-- block arrows -->
<use href="#ra" x="279" y="372"/><use href="#la" x="299" y="372"/><use href="#ua" x="319" y="372"/><use href="#da" x="339" y="372"/><use href="#lra" x="359" y="372"/><use href="#uda" x="379" y="372"/><use href="#qua" x="399" y="372"/><use href="#lru" x="419" y="372"/><use href="#bent" x="439" y="372"/><use href="#utn" x="459" y="372"/><use href="#lup" x="479" y="372"/><use href="#bup" x="499" y="372"/>
<use href="#cvr" x="279" y="393"/><use href="#cvl" x="299" y="393"/><use href="#cvu" x="319" y="393"/><use href="#cvd" x="339" y="393"/><use href="#stra" x="359" y="393"/><use href="#ntch" x="379" y="393"/><use href="#home" x="399" y="393"/><use href="#chev" x="419" y="393"/><use href="#clr" x="439" y="393"/><use href="#cld2" x="459" y="393"/><use href="#cll" x="479" y="393"/><use href="#clu" x="499" y="393"/>
<use href="#cllr" x="279" y="413"/><use href="#clq" x="299" y="413"/><use href="#cira" x="319" y="413"/>
<!-- math -->
<use href="#mth+" x="279" y="454"/><use href="#mth-" x="299" y="454"/><use href="#mthx" x="319" y="454"/><use href="#mthd" x="339" y="454"/><use href="#mthe" x="359" y="454"/><use href="#mthn" x="379" y="454"/>
<!-- flow -->
<use href="#rect" x="279" y="496"/><use href="#rr" x="299" y="496"/><use href="#fdia" x="319" y="496"/><use href="#para" x="339" y="496"/><use href="#pfl" x="359" y="496"/><use href="#int" x="379" y="496"/><use href="#doc" x="399" y="496"/><use href="#mdoc" x="419" y="496"/><use href="#term" x="439" y="496"/><use href="#hex" x="459" y="496"/><use href="#manu" x="479" y="496"/><use href="#mano" x="499" y="496"/>
<use href="#sc" x="279" y="516"/><use href="#offp" x="299" y="516"/><use href="#card" x="319" y="516"/><use href="#tape" x="339" y="516"/><use href="#sumj" x="359" y="516"/><use href="#orf" x="379" y="516"/><use href="#coll" x="399" y="516"/><use href="#sort" x="419" y="516"/><use href="#ext" x="439" y="516"/><use href="#merg" x="459" y="516"/><use href="#stor" x="479" y="516"/><use href="#dly" x="499" y="516"/>
<use href="#seq" x="279" y="536"/><use href="#mag" x="299" y="536"/><use href="#dir" x="319" y="536"/><use href="#dsp" x="339" y="536"/>
<!-- stars -->
<use href="#exp1" x="279" y="578"/><use href="#exp2" x="299" y="578"/><use href="#st4" x="319" y="578"/><use href="#st5" x="339" y="578"/><use href="#st6" x="359" y="578"/><use href="#st7" x="379" y="578"/><use href="#st8" x="399" y="578"/><use href="#st16" x="419" y="578"/><use href="#st16" x="439" y="578"/><use href="#st16" x="459" y="578"/><use href="#st16" x="479" y="578"/><use href="#st16" x="499" y="578"/>
<use href="#rbu" x="279" y="598"/><use href="#rbd" x="299" y="598"/><use href="#rbu" x="319" y="598"/><use href="#rbd" x="339" y="598"/><use href="#vsc" x="359" y="598"/><use href="#hsc" x="379" y="598"/><use href="#wav" x="399" y="598"/><use href="#dwav" x="419" y="598"/>
<!-- callouts -->
<use href="#wr" x="279" y="639"/><use href="#wrr" x="299" y="639"/><use href="#wel" x="319" y="639"/><use href="#cld" x="339" y="637" stroke-dasharray="1.500 1"/><use href="#cl1" x="359" y="639"/><use href="#cl2" x="379" y="639"/><use href="#cl3" x="399" y="639"/>
<use href="#cl1d" x="419" y="639"/><path d="M418 639L412 645"/><use href="#cl1d" x="439" y="639"/><path d="M438 639H435L432 645"/><use href="#cl1d" x="459" y="639"/><path d="M458 637H452V643L456 646"/><use href="#cl1d" x="479" y="639"/><path d="M478 639L472 645"/><use href="#cl1d" x="499" y="639"/><path d="M498 639H495L492 645"/>
<use href="#cl1d" x="279" y="659"/><path d="M278 657H272V663L276 666"/><use href="#ac1" x="299" y="659"/><use href="#ac1" x="319" y="659"/><use href="#ac3" x="339" y="659"/>
</g>
<g>
<text x="274" y="127" class="blueA">A</text><text x="301" y="127" class="blueA">A</text><text x="274" y="273" class="blueA">A</text><text x="301" y="273" class="blueA">A</text>
<text x="479" y="272" class="sm">7</text><text x="499" y="272" class="sm">8</text><text x="279" y="292" class="sm">10</text><text x="299" y="292" class="sm">12</text>
<text x="399" y="580" class="sm">8</text><text x="419" y="580" class="sm">10</text><text x="439" y="580" class="sm">12</text><text x="459" y="580" class="sm">16</text><text x="479" y="580" class="sm">24</text><text x="499" y="580" class="sm">32</text>
</g>
<path d="M518 677h2v2h-2zM521 677h2v2h-2zM521 674h2v2h-2z" fill="#999"/>

<!-- 図形 button -->
<rect x="264.500" y="63.500" width="67" height="30" rx="3" fill="#c6c6c6" stroke="#f00" stroke-width="6"/>
<path d="M271 78L279 70 287 78 279 86Z" fill="#fff" stroke="#3d7cc1" stroke-width="1.300"/>
<path d="M281 72A6.500 6.500 0 0 1 287 78L279 84Z" fill="#fff" stroke="#555"/>
<text x="289" y="83" textLength="25" style="font-size:12.500px;fill:#333">図形</text>
<path d="M317 77h6l-3 3z" fill="#555"/>

<!-- selected line -->
<rect x="305.500" y="110.500" width="25" height="24" rx="3" fill="#c0c0c0" stroke="#f00" stroke-width="6"/>
<path d="M311 117L326 129" stroke="#555"/>

<!-- number badges -->
<g>
<circle cx="209" cy="37" r="17.500" fill="#fff" fill-opacity=".82" stroke="#fff" stroke-width="5"/>
<circle cx="209" cy="37" r="17" fill="none" stroke="#f00" stroke-width="1"/>
<text x="209" y="47" class="num">1</text>
<circle cx="362" cy="58" r="17.500" fill="#fff" fill-opacity=".82" stroke="#fff" stroke-width="5"/>
<circle cx="362" cy="58" r="17" fill="none" stroke="#f00" stroke-width="1"/>
<text x="362" y="68" class="num">2</text>
<circle cx="318" cy="166" r="17.500" fill="#fff" fill-opacity=".82" stroke="#fff" stroke-width="5"/>
<circle cx="318" cy="166" r="17" fill="none" stroke="#f00" stroke-width="1"/>
<text x="318" y="176" class="num">3</text>
</g>
</svg>
</body></html>
